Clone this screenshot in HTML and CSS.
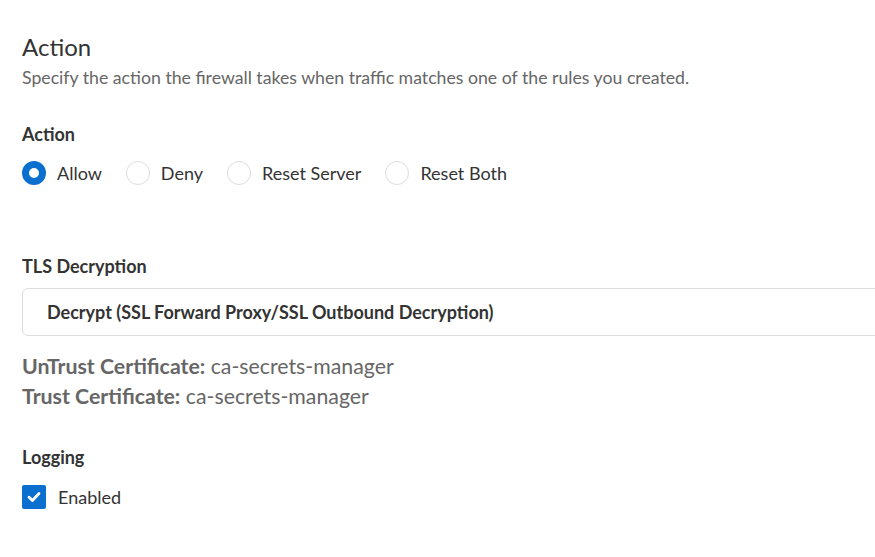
FILE: index.html
```html
<!DOCTYPE html>
<html>
<head>
<meta charset="utf-8">
<link rel="stylesheet" href="styles.css">
</head>
<body>
<div class="page">
  <h1 class="title">Action</h1>
  <p class="desc">Specify the action the firewall takes when traffic matches one of the rules you created.</p>

  <div class="field">
    <div class="label">Action</div>
    <div class="radios">
      <label class="radio"><span class="circle checked"></span><span>Allow</span></label>
      <label class="radio"><span class="circle"></span><span>Deny</span></label>
      <label class="radio"><span class="circle"></span><span>Reset Server</span></label>
      <label class="radio"><span class="circle"></span><span>Reset Both</span></label>
    </div>
  </div>

  <div class="field tls">
    <div class="label">TLS Decryption</div>
    <div class="select">Decrypt (SSL Forward Proxy/SSL Outbound Decryption)</div>
    <div class="certs">
      <div><b>UnTrust Certificate:</b> ca-secrets-manager</div>
      <div><b>Trust Certificate:</b> ca-secrets-manager</div>
    </div>
  </div>

  <div class="field logging">
    <div class="label">Logging</div>
    <label class="check">
      <span class="box"><svg width="16" height="16" viewBox="0 0 16 16"><path d="M3 8.3 L6.4 11.4 L13 4.6" fill="none" stroke="#fff" stroke-width="2.8" stroke-linecap="round" stroke-linejoin="round"/></svg></span>
      <span>Enabled</span>
    </label>
  </div>
</div>
</body>
</html>
```
FILE: styles.css
```css
html, body {
  margin: 0;
  padding: 0;
  background: #fff;
}
body {
  font-family: Lato, "Open Sans", sans-serif;
  color: #333;
  overflow: hidden;
}
.page {
  padding: 32px 0 0 22px;
}
.title {
  margin: 0;
  font-size: 24px;
  font-weight: 400;
  line-height: 30px;
  color: #333;
}
.desc {
  margin: 5px 0 0;
  font-size: 17.7px;
  line-height: 22px;
  color: #666;
}
.field {
  margin-top: 33px;
}
.label {
  font-size: 18px;
  font-weight: 700;
  line-height: 24px;
  color: #333;
}
.radios {
  display: flex;
  gap: 24px;
  margin-top: 15px;
}
.radio {
  display: flex;
  align-items: center;
  gap: 11px;
  font-size: 18px;
  line-height: 24px;
  color: #333;
}
.circle {
  width: 24px;
  height: 24px;
  border: 1px solid #ddd;
  border-radius: 50%;
  box-sizing: border-box;
  background: #fff;
}
.circle.checked {
  border: 7px solid #0a6fcf;
}
.tls {
  margin-top: 69px;
}
.select {
  margin-top: 10px;
  margin-right: -20px;
  height: 48px;
  box-sizing: border-box;
  border: 1px solid #ddd;
  border-radius: 6px;
  display: flex;
  align-items: center;
  padding-left: 24px;
  font-size: 18px;
  font-weight: 700;
  color: #333;
}
.certs {
  margin-top: 15px;
  font-size: 21.3px;
  line-height: 30px;
  color: #666;
}
.certs b {
  font-weight: 700;
}
.logging {
  margin-top: 34px;
}
.check {
  display: flex;
  align-items: center;
  gap: 12px;
  margin-top: 16px;
  font-size: 18px;
  line-height: 24px;
  color: #333;
}
.box {
  width: 24px;
  height: 24px;
  background: #0a6fcf;
  border-radius: 2px;
  display: flex;
  align-items: center;
  justify-content: center;
}
```
